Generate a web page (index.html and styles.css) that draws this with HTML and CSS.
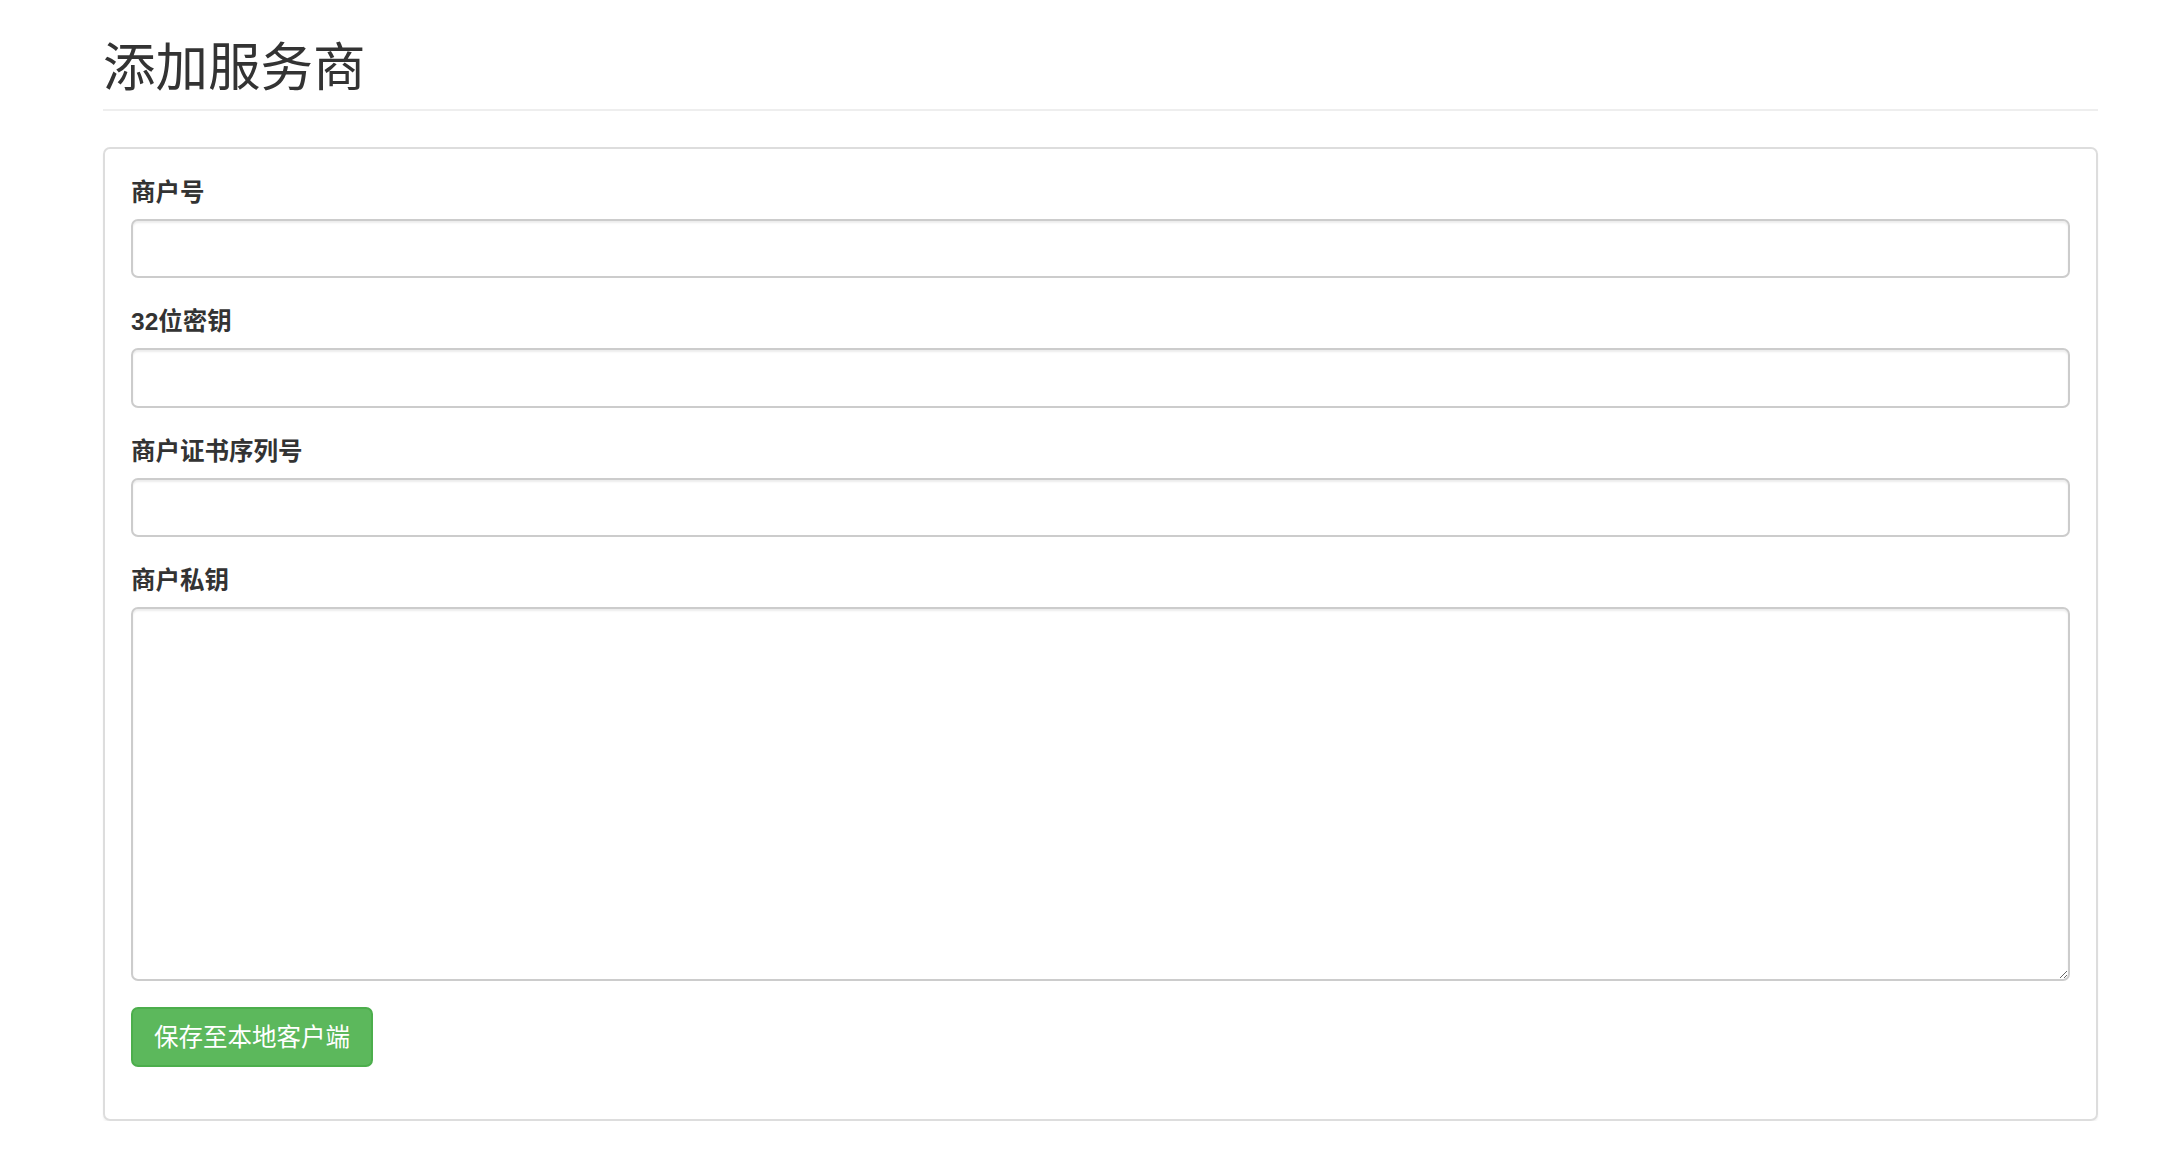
FILE: index.html
```html
<!DOCTYPE html>
<html lang="zh-CN">
<head>
    <meta charset="UTF-8">
    <meta name="viewport" content="width=device-width, initial-scale=1.0">
    <title>添加服务商</title>
    <link rel="stylesheet" href="styles.css">
</head>
<body>
    <div class="container">
        <div class="page-header">
            <h2>添加服务商</h2>
        </div>

        <div class="panel">
            <form class="panel-body">
                <div class="form-group">
                    <label for="mchId">商户号</label>
                    <input type="text" class="form-control" id="mchId">
                </div>
                <div class="form-group">
                    <label for="apiKey">32位密钥</label>
                    <input type="text" class="form-control" id="apiKey">
                </div>
                <div class="form-group">
                    <label for="serialNo">商户证书序列号</label>
                    <input type="text" class="form-control" id="serialNo">
                </div>
                <div class="form-group">
                    <label for="privateKey">商户私钥</label>
                    <textarea class="form-control" id="privateKey" rows="10"></textarea>
                </div>
                <div class="form-group">
                    <button type="button" class="btn btn-success">保存至本地客户端</button>
                </div>
            </form>
        </div>
    </div>
</body>
</html>
```

FILE: styles.css
```css
body {
    margin: 0;
    font-family: "Liberation Sans", "Noto Sans CJK SC", sans-serif;
    font-size: 24.5px;
    line-height: 35px;
    color: #333;
    background: #fff;
}

.container {
    width: 1995px;
    margin-left: 103px;
}

.page-header {
    margin: 39px 0 36px 0;
    padding-bottom: 12px;
    border-bottom: 2px solid #eee;
}

h2 {
    margin: 0;
    font-size: 52.5px;
    font-weight: 400;
    line-height: 1.1;
}

.panel {
    border: 2px solid #ddd;
    border-radius: 7px;
    box-shadow: 0 2px 2px rgba(0, 0, 0, 0.05);
}

.panel-body {
    margin: 0;
    padding: 26px;
}

.form-group {
    margin-bottom: 26px;
}

label {
    display: inline-block;
    margin-bottom: 9px;
    font-weight: bold;
}

.form-control {
    display: block;
    box-sizing: border-box;
    width: 100%;
    height: 59.5px;
    padding: 10.5px 21px;
    font-family: inherit;
    font-size: 24.5px;
    line-height: 35px;
    color: #555;
    background: #fff;
    border: 2px solid #ccc;
    border-radius: 7px;
    box-shadow: inset 0 2px 2px rgba(0, 0, 0, 0.075);
}

textarea.form-control {
    height: 374px;
}

.btn {
    display: inline-block;
    padding: 10.5px 21px;
    font-family: inherit;
    font-size: 24.5px;
    line-height: 35px;
    border-radius: 7px;
    cursor: pointer;
}

.btn-success {
    color: #fff;
    background: #5cb85c;
    border: 2px solid #4cae4c;
}
```
